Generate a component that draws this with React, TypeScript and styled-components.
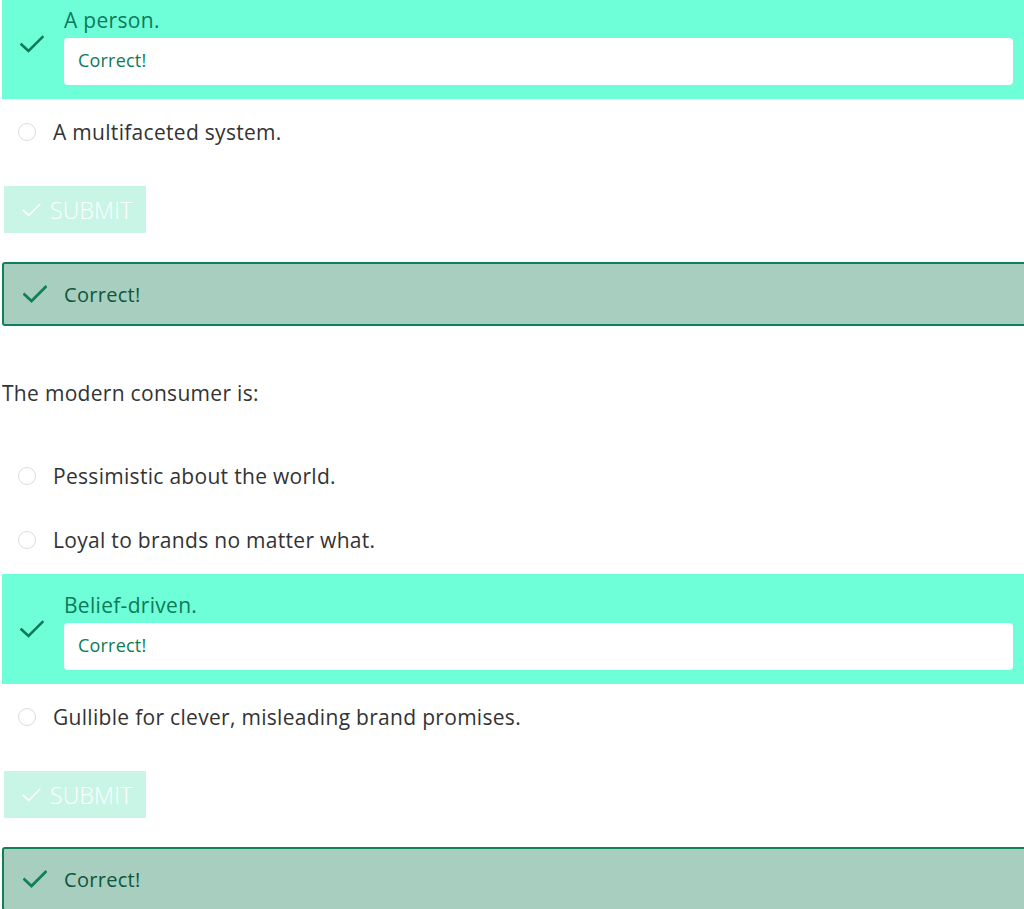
import React from "react";
import styled, { createGlobalStyle } from "styled-components";

const Global = createGlobalStyle`
  html, body { margin: 0; padding: 0; background: #fff; overflow: hidden; }
  body { font-family: "Open Sans", "Noto Sans", sans-serif; }
`;

const Page = styled.div`
  margin-top: -13px;
  margin-left: 2px;
  width: 1022px;
  display: flex;
  flex-direction: column;
`;

const Question = styled.section`
  display: flex;
  flex-direction: column;
`;

const Prompt = styled.div`
  font-size: 21px;
  letter-spacing: 0.3px;
  line-height: 28px;
  color: #333;
  margin: 53px 0 37px;
`;

const Options = styled.div`
  display: flex;
  flex-direction: column;
`;

const OptionRow = styled.label`
  height: 64px;
  display: flex;
  align-items: center;
  font-size: 21px;
  letter-spacing: 0.3px;
  color: #333;
`;

const Radio = styled.span`
  width: 16px;
  height: 16px;
  border: 1px solid #dcdcdc;
  border-radius: 50%;
  margin-left: 16px;
  margin-right: 17px;
  box-sizing: content-box;
`;

const Chosen = styled.div`
  margin: 2px 0 1px;
  height: 110px;
  background: #6effd8;
  display: flex;
  align-items: center;
  box-sizing: border-box;
`;

const ChosenIcon = styled.div`
  width: 62px;
  display: flex;
  padding-left: 18px;
  box-sizing: border-box;
  color: #0e7a58;
`;

const ChosenBody = styled.div`
  flex: 1;
  padding-right: 11px;
  padding-top: 1px;
  display: flex;
  flex-direction: column;
`;

const ChosenLabel = styled.div`
  font-size: 21px;
  letter-spacing: 0.3px;
  line-height: 30px;
  color: #0e7a58;
  margin-bottom: 3px;
`;

const Feedback = styled.div`
  height: 47px;
  box-sizing: border-box;
  padding: 0 0 3px 14px;
  background: #fff;
  border-radius: 4px;
  display: flex;
  align-items: center;
  font-size: 18px;
  letter-spacing: 0.2px;
  color: #0e7a58;
`;

const SubmitButton = styled.button`
  align-self: flex-start;
  margin: 22px 0 0 2px;
  height: 47px;
  padding: 0 14px 0 18px;
  border: none;
  background: #c8f5e5;
  color: #fff;
  display: flex;
  align-items: center;
  gap: 9px;
  font-family: "Open Sans", sans-serif;
  font-weight: 300;
  font-size: 23px;
  letter-spacing: 0.2px;
`;

const Result = styled.div`
  margin-top: 29px;
  width: 1040px;
  height: 64px;
  box-sizing: border-box;
  background: #a8cebf;
  border: 2px solid #10805c;
  border-radius: 3px;
  display: flex;
  align-items: center;
  padding-left: 19px;
  gap: 17px;
  font-size: 20px;
  letter-spacing: 0.3px;
  color: #0d563c;
`;

const Check = ({ w, h, color, sw }: { w: number; h: number; color: string; sw: number }) => (
  <svg width={w} height={h} viewBox="0 0 24 18" fill="none">
    <path d="M1.5 9.5 L8.5 16 L22.5 2" stroke={color} strokeWidth={sw} strokeLinecap="square" />
  </svg>
);

type Q = { prompt?: string; before: string[]; chosen: string; after: string[] };

const questions: Q[] = [
  { before: [], chosen: "A person.", after: ["A multifaceted system."] },
  {
    prompt: "The modern consumer is:",
    before: ["Pessimistic about the world.", "Loyal to brands no matter what."],
    chosen: "Belief-driven.",
    after: ["Gullible for clever, misleading brand promises."],
  },
];

const Option = ({ text }: { text: string }) => (
  <OptionRow>
    <Radio />
    {text}
  </OptionRow>
);

export default function App() {
  return (
    <>
      <Global />
      <Page>
        {questions.map((q, i) => (
          <Question key={i}>
            {q.prompt && <Prompt>{q.prompt}</Prompt>}
            <Options>
              {q.before.map((t) => (
                <Option key={t} text={t} />
              ))}
              <Chosen>
                <ChosenIcon>
                  <Check w={24} h={18} color="#0e7a58" sw={2.6} />
                </ChosenIcon>
                <ChosenBody>
                  <ChosenLabel>{q.chosen}</ChosenLabel>
                  <Feedback>Correct!</Feedback>
                </ChosenBody>
              </Chosen>
              {q.after.map((t) => (
                <Option key={t} text={t} />
              ))}
            </Options>
            <SubmitButton>
              <Check w={19} h={14} color="#ffffff" sw={2} />
              SUBMIT
            </SubmitButton>
            <Result>
              <Check w={24} h={18} color="#10805c" sw={2.8} />
              Correct!
            </Result>
          </Question>
        ))}
      </Page>
    </>
  );
}
